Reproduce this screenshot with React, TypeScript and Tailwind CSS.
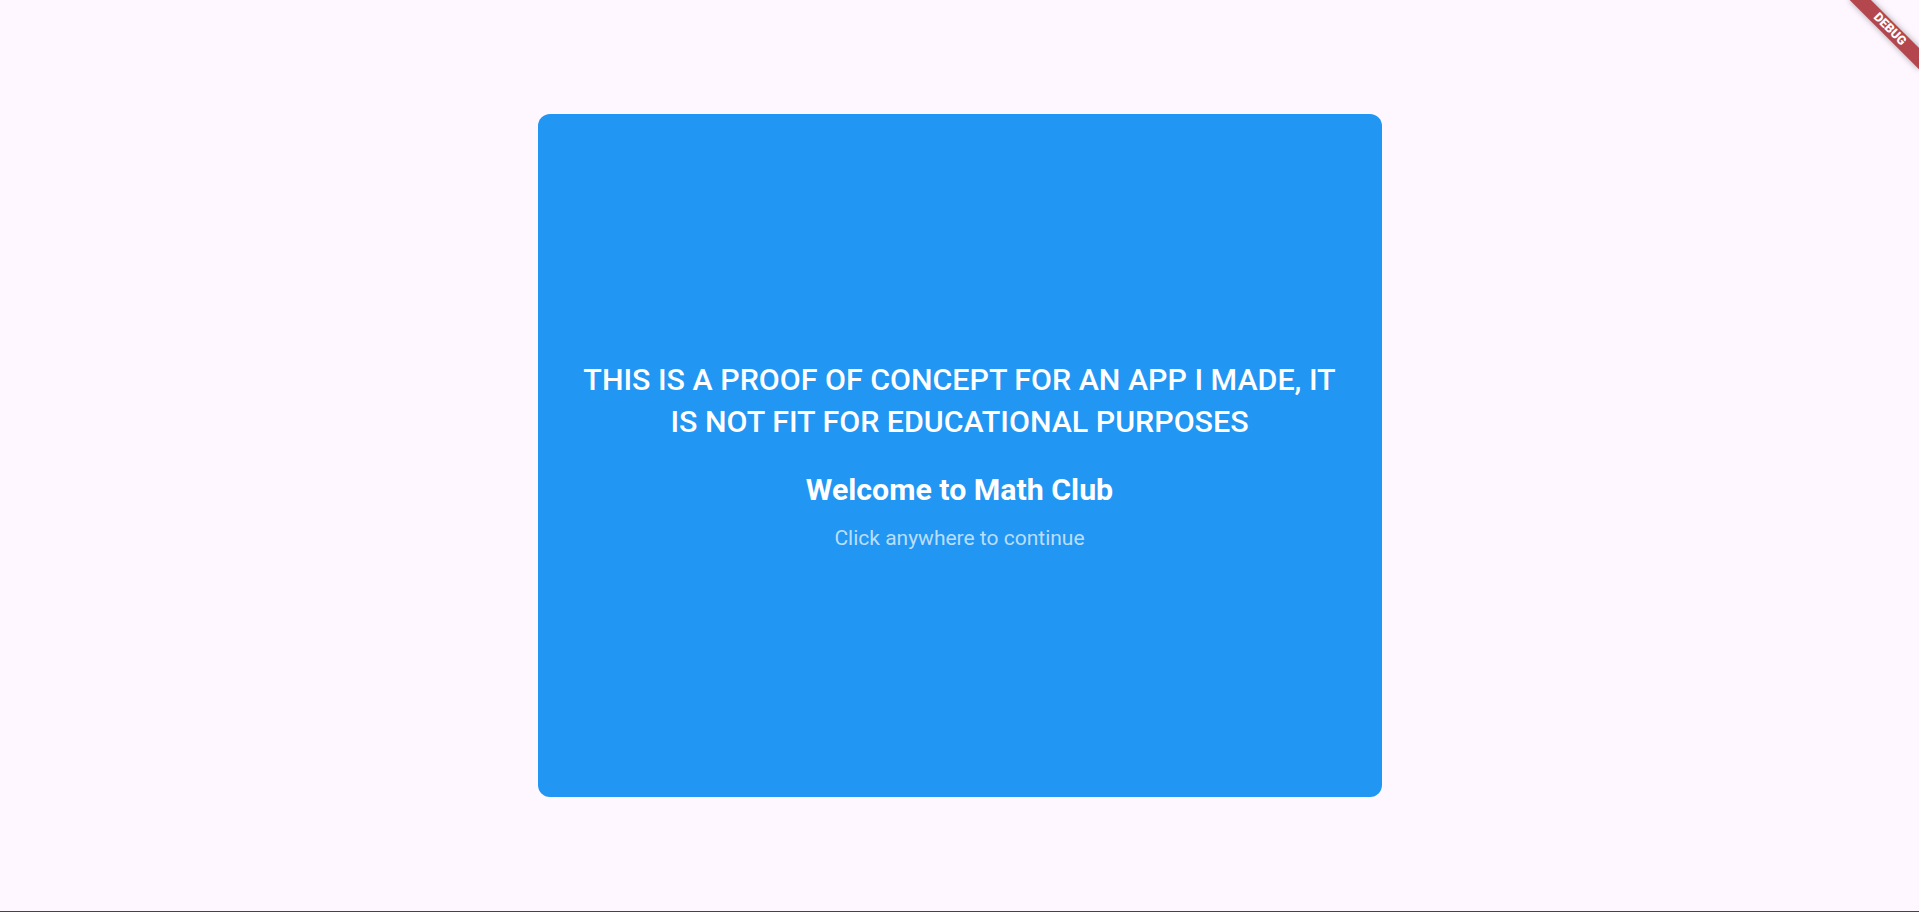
export default function App() {
    return (
        <div className="relative flex h-[912px] w-full flex-col overflow-hidden bg-[#fef7ff] font-['Roboto',sans-serif]">
            <div className="flex flex-1 items-center justify-center">
                <div className="flex h-[683px] w-[844px] flex-col items-center justify-center rounded-[12px] bg-[#2196f3] px-[42px] text-center">
                    <h1 className="text-[30.4px] font-medium leading-[42px] text-white">
                        THIS IS A PROOF OF CONCEPT FOR AN APP I MADE, IT IS NOT FIT FOR EDUCATIONAL PURPOSES
                    </h1>
                    <h2 className="mt-[29px] text-[30.3px] font-bold leading-9 text-white">Welcome to Math Club</h2>
                    <p className="mt-4 text-[21px] leading-7 text-white/70">Click anywhere to continue</p>
                </div>
            </div>
            <div className="h-px w-full bg-[#444444]" />

            {/* debug banner */}
            <div className="absolute right-[-49px] top-[34px] flex h-[15px] w-[98px] origin-[49px_-34px] rotate-45 items-center justify-center bg-[#b3474d] shadow-[0_0_6px_rgba(0,0,0,0.35)]">
                <span className="text-[12.5px] font-black leading-none text-white">DEBUG</span>
            </div>
        </div>
    );
}
